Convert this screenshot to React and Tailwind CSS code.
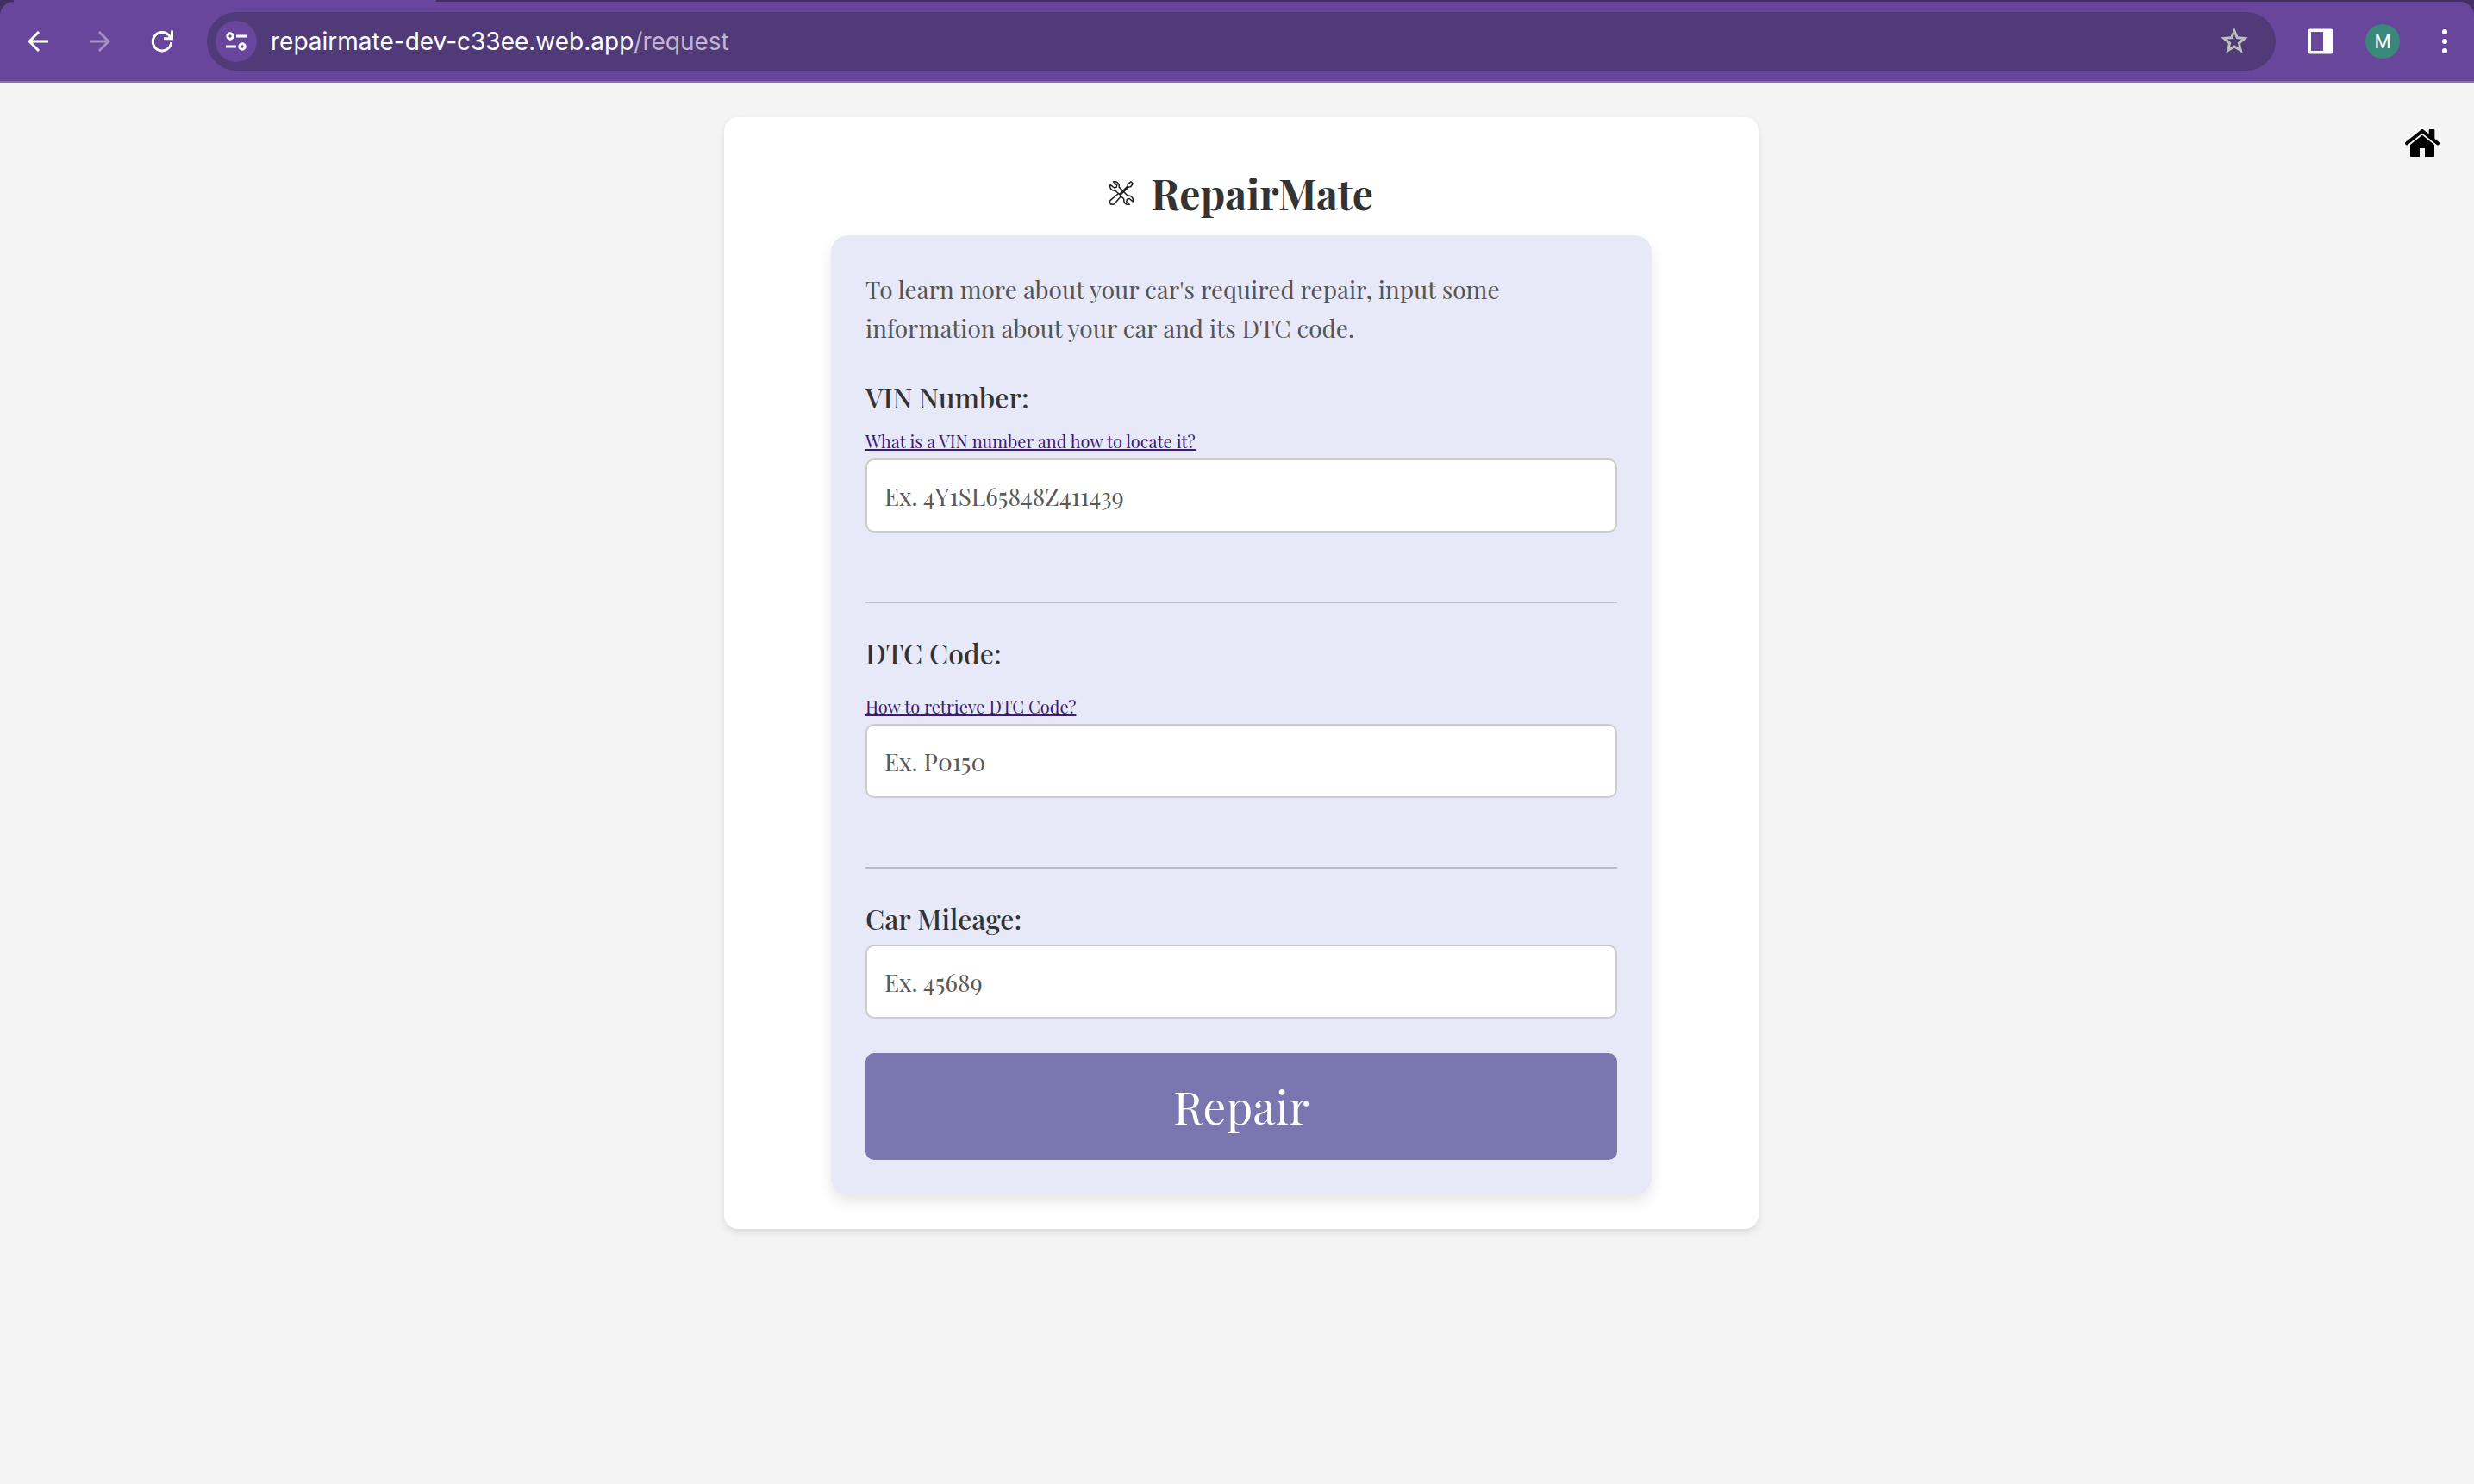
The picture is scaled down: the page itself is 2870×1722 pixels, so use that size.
function ToolButton({ label, className, children }) {
  return (
    <button type="button" aria-label={label} className={`flex h-12 w-12 shrink-0 items-center justify-center ${className}`}>
      {children}
    </button>
  );
}

function BrowserBar() {
  return (
    <header className="bg-[#432f63]">
      <div className="flex h-0.5 px-4">
        <div className="w-[490px] bg-[#67469c]" />
      </div>
      <div className="flex h-[94px] items-center rounded-t-2xl border-b-2 border-[#8c6cb5] bg-[#67469c] pr-2.5 pl-5 text-white">
        <ToolButton label="Back" className="text-white">
          <svg viewBox="0 0 24 24" className="h-6 w-6" fill="none" stroke="currentColor" strokeWidth="3">
            <path d="M24 12H2M13 1 2 12l11 11" />
          </svg>
        </ToolButton>
        <ToolButton label="Forward" className="ml-6 text-[#a48fc4]">
          <svg viewBox="0 0 24 24" className="h-6 w-6" fill="none" stroke="currentColor" strokeWidth="3">
            <path d="M0 12h22M11 1l11 11-11 11" />
          </svg>
        </ToolButton>
        <ToolButton label="Reload" className="ml-6 text-white">
          <svg viewBox="0 0 24 24" className="h-6 w-6 overflow-visible" fill="none" stroke="currentColor" strokeWidth="3">
            <path d="M22.700 13A10.700 10.700 0 1 1 19.500 4.500l3 3.500" />
            <path d="M23.500 -.5v9.300H14" />
          </svg>
        </ToolButton>
        <div className="ml-7 flex h-[68px] grow items-center rounded-full bg-[#503a77] pr-6 pl-2.5">
          <ToolButton label="Site information" className="rounded-full bg-[#67469c]">
            <svg viewBox="0 0 24 24" className="h-6 w-6" fill="none" stroke="currentColor" strokeWidth="3">
              <circle cx="5" cy="6" r="3.200" />
              <path d="M12 6h12M0 18h12" />
              <circle cx="19" cy="18" r="3.200" />
            </svg>
          </ToolButton>
          <p className="ml-4 grow font-[Inter,sans-serif] text-[28px] leading-10 text-white">
            repairmate-dev-c33ee.web.app<span className="text-[#c0b5d2]">/request</span>
          </p>
          <ToolButton label="Bookmark" className="text-[#bdbdbd]">
            <svg viewBox="0 0 32 32" className="h-8 w-8" fill="none" stroke="currentColor" strokeWidth="3">
              <path d="M16 4l3.200 7.700 8.800.8-6.600 5.500 2 8.500L16 22l-7.400 4.500 2-8.500L4 12.500l8.800-.8z" />
            </svg>
          </ToolButton>
        </div>
        <ToolButton label="Side panel" className="ml-7 text-white">
          <svg viewBox="0 0 30 30" className="h-[30px] w-[30px]" fill="currentColor">
            <path fillRule="evenodd" d="M3 .5h24a2.500 2.500 0 0 1 2.500 2.500v24a2.500 2.500 0 0 1-2.500 2.500H3A2.500 2.500 0 0 1 .5 27V3A2.500 2.500 0 0 1 3 .5zM4 4v22h14V4z" />
          </svg>
        </ToolButton>
        <button type="button" className="ml-7 flex h-10 w-10 shrink-0 items-center justify-center rounded-full bg-[#3a887b] font-[Roboto,sans-serif] text-[22px]">
          M
        </button>
        <ToolButton label="Menu" className="ml-7 text-white">
          <svg viewBox="0 0 8 28" className="h-7 w-2" fill="currentColor">
            <circle cx="4" cy="3" r="3" />
            <circle cx="4" cy="14" r="3" />
            <circle cx="4" cy="25" r="3" />
          </svg>
        </ToolButton>
      </div>
    </header>
  );
}

function HomeIcon() {
  return (
    <svg viewBox="0 0 120 96" className="h-8 w-10" fill="currentColor">
      <path d="M83 3q0-3 3-3h14q3 0 3 3v35L83 23z" />
      <path d="M6 49 60 6l54 43" fill="none" stroke="currentColor" strokeWidth="12" strokeLinecap="round" strokeLinejoin="round" />
      <path d="M18 54 60 20l42 34v39q0 3-3 3H69V66H51v30H21q-3 0-3-3z" />
    </svg>
  );
}

function ToolsIcon() {
  return (
    <svg viewBox="0 0 28 28" className="h-7 w-7" fill="none" stroke="#222" strokeWidth="1.500" strokeLinejoin="round" strokeLinecap="round">
      <path d="M4.500.9 8.700 4.600 8.200 7.200 5.600 8 1 4.300C-.2 8.500 2.600 11.700 7 11.200L16.800 21c-.6 3.800 2.200 7.200 6.400 6.300L19.800 24l.6-2.800 2.800-.7 4 3.500c1-4-1.700-7.600-6.200-7L11.200 7.100C11.800 2.800 8.500-.2 4.500.9z" />
      <path fill="#fff" d="M10.700 14.500 13.600 17.400 6.300 26c-1.700 1.900-4.200 1.600-5.200.2-1-1.400-.6-3.400.9-4.600z" />
      <path fill="#fff" d="M11.800 15.200 21 6.100l.4-2.500L25 .8 27.300 3l-2.700 3.800-2.600.3-9.100 9.200z" />
    </svg>
  );
}

function Field({ id, placeholder }) {
  return (
    <input
      id={id}
      type="text"
      placeholder={placeholder}
      className="block h-[86px] w-full rounded-[10px] border-2 border-[#ccc] bg-white px-5 text-[28px] text-[#333] placeholder:text-[#595959]"
    />
  );
}

function Label({ htmlFor, className, children }) {
  return (
    <label htmlFor={htmlFor} className={`mt-10 block text-[32px] leading-9 font-medium text-[#333] ${className}`}>
      {children}
    </label>
  );
}

function HelpLink({ href, children }) {
  return (
    <a href={href} className="block w-fit text-[20px] leading-10 text-[#3d1a78] underline">
      {children}
    </a>
  );
}

export default function App() {
  return (
    <div className="flex min-h-screen flex-col bg-[#f4f4f4]">
      <BrowserBar />
      <div className="relative grow pt-10 pb-10 pl-2.5 font-['Playfair_Display','Liberation_Serif',serif]">
        <a href="#home" aria-label="Home" className="absolute top-[54px] right-10 text-black">
          <HomeIcon />
        </a>
        <main className="mx-auto flex max-w-[1200px] flex-col items-center rounded-2xl bg-white px-10 pt-[60px] pb-10 shadow-[0_4px_8px_rgba(0,0,0,0.1)]">
          <h1 className="flex h-[77px] items-start gap-5 text-[48px] leading-[56px] font-bold text-[#333]">
            <span className="mt-3.5">
              <ToolsIcon />
            </span>
            RepairMate
          </h1>
          <form className="w-full max-w-[952px] rounded-[20px] bg-[#e7e8f8] p-10 shadow-[0_8px_16px_rgba(0,0,0,0.1)]">
            <p className="text-[28px] leading-[45px] text-[#555]">
              To learn more about your car's required repair, input some
              <br />
              information about your car and its DTC code.
            </p>
            <Label htmlFor="vin" className="mb-[13px]">VIN Number:</Label>
            <HelpLink href="#vin-help">What is a VIN number and how to locate it?</HelpLink>
            <Field id="vin" placeholder="Ex. 4Y1SL65848Z411439" />
            <hr className="mt-20 border-t-2 border-[#b9bbca]" />
            <Label htmlFor="dtc" className="mb-6">DTC Code:</Label>
            <HelpLink href="#dtc-help">How to retrieve DTC Code?</HelpLink>
            <Field id="dtc" placeholder="Ex. P0150" />
            <hr className="mt-20 border-t-2 border-[#b9bbca]" />
            <Label htmlFor="mileage" className="mb-3">Car Mileage:</Label>
            <Field id="mileage" placeholder="Ex. 45689" />
            <button type="button" className="mt-10 block h-[124px] w-full rounded-[10px] bg-[#7a76b0] text-[53px] text-white">
              Repair
            </button>
          </form>
        </main>
      </div>
    </div>
  );
}
